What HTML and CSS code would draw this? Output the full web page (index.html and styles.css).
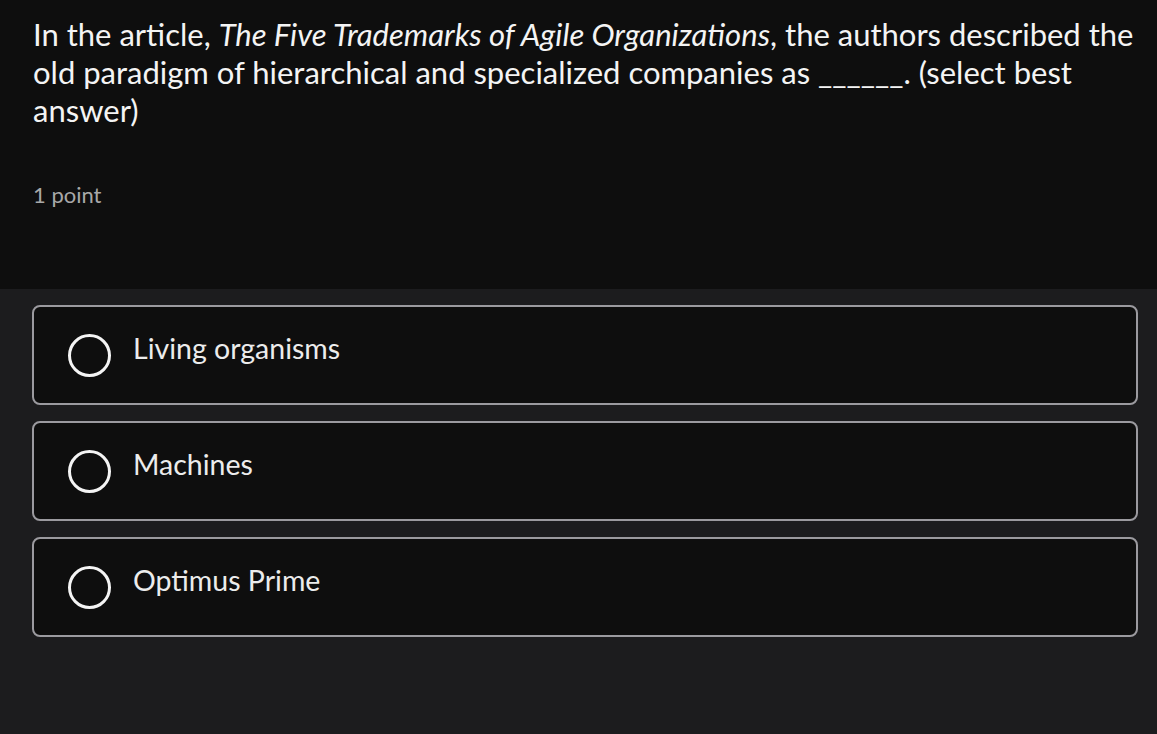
FILE: index.html
```html
<!DOCTYPE html>
<html lang="en">
<head>
<meta charset="utf-8">
<title>Quiz question</title>
<link rel="stylesheet" href="styles.css">
</head>
<body>
<section class="question">
  <p class="prompt">In the article, <em>The Five Trademarks of Agile Organizations</em>, the authors described the old paradigm of hierarchical and specialized companies as ______. (select best answer)</p>
  <p class="points">1 point</p>
</section>
<section class="options">
  <label class="option"><span class="radio"></span><span class="option-text">Living organisms</span></label>
  <label class="option"><span class="radio"></span><span class="option-text">Machines</span></label>
  <label class="option"><span class="radio"></span><span class="option-text">Optimus Prime</span></label>
</section>
</body>
</html>
```
FILE: styles.css
```css
html, body {
  margin: 0;
  padding: 0;
}
body {
  background: #1c1c1e;
  font-family: Lato, "Liberation Sans", sans-serif;
  color: #f2f2f2;
  width: 1157px;
  height: 734px;
  overflow: hidden;
}
.question {
  background: #0e0e0e;
  height: 289px;
  box-sizing: border-box;
  padding: 15px 20px 0 33px;
}
.prompt {
  margin: 0;
  font-size: 31px;
  line-height: 38px;
  color: #f4f4f4;
}
.prompt em {
  font-style: italic;
}
.points {
  margin: 53px 0 0;
  font-size: 22px;
  line-height: 26px;
  color: #a8a8a8;
}
.options {
  display: flex;
  flex-direction: column;
  gap: 16px;
  padding: 16px 19px 0 32px;
}
.option {
  display: flex;
  align-items: center;
  height: 100px;
  box-sizing: border-box;
  border: 2px solid #9b9a9f;
  border-radius: 8px;
  background: #0e0e0e;
  padding-left: 34px;
}
.radio {
  width: 43px;
  height: 43px;
  box-sizing: border-box;
  border: 3px solid #f4f4f4;
  border-radius: 50%;
  flex: none;
}
.option-text {
  margin-left: 22px;
  font-size: 28.5px;
  line-height: 32px;
  padding-bottom: 14px;
  color: #ececec;
}
```
